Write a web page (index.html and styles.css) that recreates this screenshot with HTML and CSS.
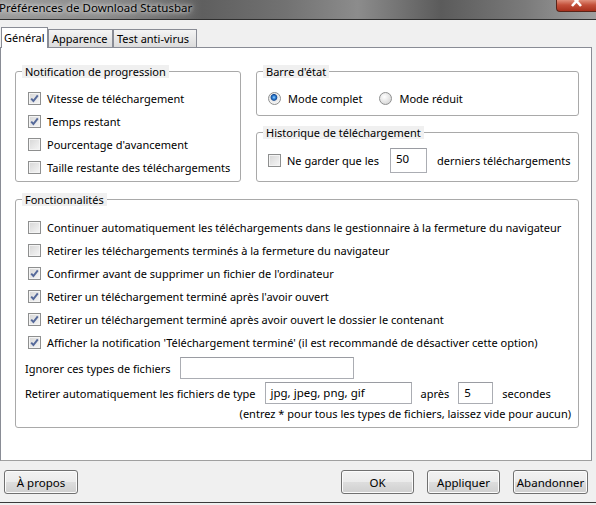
FILE: index.html
```html
<!DOCTYPE html>
<html lang="fr">
<head>
<meta charset="UTF-8">
<title>Préférences de Download Statusbar</title>
<link rel="stylesheet" href="styles.css">
</head>
<body>
<div class="window">
    <div class="titlebar">
        <span class="title">Préférences de Download Statusbar</span>
        <span class="close"><svg width="12" height="7" viewBox="0 0 12 7"><path d="M1 -4 L10 6 M10 -4 L1 6" stroke="#fff" stroke-width="2.6"/></svg></span>
    </div>
    <div class="tabs">
        <span class="tab selected tab-general">Général</span>
        <span class="tab tab-look">Apparence</span>
        <span class="tab tab-av">Test anti-virus</span>
    </div>
    <div class="panel">
        <div class="top-row">
            <fieldset class="group">
                <legend>Notification de progression</legend>
                <div class="group-body notif">
                    <label class="check"><span class="cb on"><svg viewBox="0 0 11 11"><path d="M2.2 5.6 L4.4 8 L8.8 2.4" /></svg></span>Vitesse de téléchargement</label>
                    <label class="check"><span class="cb on"><svg viewBox="0 0 11 11"><path d="M2.2 5.6 L4.4 8 L8.8 2.4" /></svg></span>Temps restant</label>
                    <label class="check"><span class="cb"></span>Pourcentage d'avancement</label>
                    <label class="check"><span class="cb"></span>Taille restante des téléchargements</label>
                </div>
            </fieldset>
            <div class="right-col">
                <fieldset class="group">
                    <legend>Barre d'état</legend>
                    <div class="group-body radios">
                        <label class="radio"><span class="rb on"></span>Mode complet</label>
                        <label class="radio"><span class="rb"></span>Mode réduit</label>
                    </div>
                </fieldset>
                <fieldset class="group">
                    <legend>Historique de téléchargement</legend>
                    <div class="group-body history">
                        <label class="check"><span class="cb"></span>Ne garder que les</label>
                        <span class="field num">50</span>
                        <span class="text">derniers téléchargements</span>
                    </div>
                </fieldset>
            </div>
        </div>

        <fieldset class="group features">
            <legend>Fonctionnalités</legend>
            <div class="group-body">
                <div class="check-list">
                    <label class="check"><span class="cb"></span>Continuer automatiquement les téléchargements dans le gestionnaire à la fermeture du navigateur</label>
                    <label class="check"><span class="cb"></span>Retirer les téléchargements terminés à la fermeture du navigateur</label>
                    <label class="check"><span class="cb on"><svg viewBox="0 0 11 11"><path d="M2.2 5.6 L4.4 8 L8.8 2.4" /></svg></span>Confirmer avant de supprimer un fichier de l'ordinateur</label>
                    <label class="check"><span class="cb on"><svg viewBox="0 0 11 11"><path d="M2.2 5.6 L4.4 8 L8.8 2.4" /></svg></span>Retirer un téléchargement terminé après l'avoir ouvert</label>
                    <label class="check"><span class="cb on"><svg viewBox="0 0 11 11"><path d="M2.2 5.6 L4.4 8 L8.8 2.4" /></svg></span>Retirer un téléchargement terminé après avoir ouvert le dossier le contenant</label>
                    <label class="check"><span class="cb on"><svg viewBox="0 0 11 11"><path d="M2.2 5.6 L4.4 8 L8.8 2.4" /></svg></span>Afficher la notification 'Téléchargement terminé' (il est recommandé de désactiver cette option)</label>
                </div>
                <div class="field-row">
                    <span class="text">Ignorer ces types de fichiers</span>
                    <span class="field ignore"></span>
                </div>
                <div class="field-row">
                    <span class="text">Retirer automatiquement les fichiers de type</span>
                    <span class="field types">jpg, jpeg, png, gif</span>
                    <span class="text">après</span>
                    <span class="field secs">5</span>
                    <span class="text">secondes</span>
                </div>
                <div class="note">(entrez * pour tous les types de fichiers, laissez vide pour aucun)</div>
            </div>
        </fieldset>
    </div>
    <div class="footer">
        <button class="btn about">À propos</button>
        <button class="btn ok">OK</button>
        <button class="btn apply">Appliquer</button>
        <button class="btn cancel">Abandonner</button>
    </div>
</div>
</body>
</html>
```

FILE: styles.css
```css
* {
    box-sizing: border-box;
}

body {
    margin: 0;
    font-family: 'Noto Sans', 'Open Sans', sans-serif;
    font-size: 11px;
    color: #000;
    background: #f0f0f0;
}

.window {
    width: 596px;
    height: 505px;
    display: flex;
    flex-direction: column;
    background: #f0f0f0;
}

/* title bar (aero glass) */
.titlebar {
    height: 20px;
    flex: none;
    display: flex;
    align-items: flex-start;
    border-bottom: 1px solid #2e2e2e;
    background: linear-gradient(90deg, #9a9a9a 0%, #8a8a8a 18%, #5f5f5f 34%, #727272 48%, #8c8c8c 60%, #5b5b5b 74%, #7a7a7a 88%, #a0a0a0 100%);
}

.title {
    font-size: 11.5px;
    line-height: 15px;
    margin-left: -1px;
    text-shadow: 0 0 4px #fff, 0 0 8px #ddd;
}

.close {
    margin-left: auto;
    width: 40px;
    height: 12px;
    display: flex;
    justify-content: center;
    border: 1px solid #5a2418;
    border-top: 0;
    border-right: 0;
    border-radius: 0 0 0 4px;
    background: linear-gradient(#e0907c, #c4503a 45%, #a8301c);
}

/* tabs */
.tabs {
    height: 27px;
    flex: none;
    display: flex;
    align-items: flex-end;
    padding-left: 1px;
}

.tab {
    height: 18px;
    padding: 0 0 0 3px;
    line-height: 18px;
    white-space: nowrap;
    overflow: hidden;
    border: 1px solid #898c95;
    border-bottom: 0;
    background: linear-gradient(#f4f4f4, #e8e8e8 50%, #dcdcdc);
}

.tab.selected {
    position: relative;
    z-index: 1;
    height: 21px;
    margin-bottom: -1px;
    padding-left: 2px;
    line-height: 19px;
    background: #fff;
}

.tab-general {
    width: 47px;
}

.tab-look {
    width: 65px;
}

.tab-av {
    width: 84px;
}

/* panel */
.panel {
    width: 592px;
    height: 414px;
    flex: none;
    padding: 17px 12px 0 14px;
    background: #fff;
    border: 1px solid #898c95;
    border-bottom-color: #a0a0a0;
}

.top-row {
    display: grid;
    grid-template-columns: 226px 1fr;
    column-gap: 15px;
}

.right-col {
    display: flex;
    flex-direction: column;
    justify-content: space-between;
}

.group {
    margin: 0;
    padding: 0;
    min-width: 0;
    border: 1px solid #a9a9a9;
    border-radius: 3px;
}

.group legend {
    margin-left: 6px;
    padding: 0 3px;
    line-height: 13px;
    background: #f0f0f0;
}

.group-body {
    display: flex;
    flex-direction: column;
    gap: 6px;
}

.notif {
    padding: 12px 8px 5px 12px;
}

.radios {
    flex-direction: row;
    gap: 17px;
    padding: 12px 8px 8px 11px;
}

.history {
    flex-direction: row;
    align-items: center;
    gap: 10px;
    padding: 9px 8px 8px 11px;
}

.history .check {
    margin-right: 1px;
}

.text {
    white-space: nowrap;
}

.features {
    margin-top: 11px;
}

.features .group-body {
    gap: 3px;
    padding: 13px 7px 6px 9px;
}

.check-list {
    display: flex;
    flex-direction: column;
    gap: 6px;
    padding-left: 3px;
    margin-bottom: 3px;
}

/* checkbox + radio */
.check, .radio {
    display: flex;
    align-items: center;
    gap: 6px;
    height: 17px;
    white-space: nowrap;
}

.radio {
    gap: 7px;
}

.cb {
    width: 13px;
    height: 13px;
    flex: none;
    border: 1px solid #8e8f8f;
    background: linear-gradient(135deg, #d6d6d6, #f6f6f6);
    box-shadow: inset 0 0 0 1px #f4f4f4;
}

.cb svg {
    display: block;
    width: 11px;
    height: 11px;
}

.cb svg path {
    fill: none;
    stroke: #55699a;
    stroke-width: 2;
}

.rb {
    width: 13px;
    height: 13px;
    flex: none;
    border-radius: 50%;
    border: 1px solid #8e8f8f;
    background: radial-gradient(circle at 40% 35%, #ffffff, #dcdcdc 70%, #c8c8c8);
}

.rb.on {
    background: radial-gradient(circle at 45% 40%, #9ad6ff 0, #2f80d6 18%, #174c94 33%, #e8e8e8 42%, #f4f4f4 70%, #cfcfcf);
}

/* fields */
.field-row {
    display: flex;
    align-items: center;
    gap: 9px;
    height: 22px;
}

.field {
    height: 22px;
    padding: 1px 5px 0;
    line-height: 17px;
    font-size: 11.5px;
    white-space: nowrap;
    border: 1px solid #abadb3;
    border-top-color: #9a9ca2;
    background: #fff;
}

.field.num {
    width: 37px;
    height: 25px;
}

.field.ignore {
    width: 174px;
}

.field.types {
    width: 147px;
}

.field.secs {
    width: 35px;
}

.note {
    height: 14px;
    line-height: 14px;
    text-align: right;
    white-space: nowrap;
}

/* footer */
.footer {
    height: 42px;
    flex: none;
    display: flex;
    align-items: flex-start;
    gap: 13px;
    padding: 9px 8px 0 4px;
    border-bottom: 1px solid #3a3a3a;
}

.btn {
    height: 24px;
    width: 73px;
    padding: 0;
    font: inherit;
    font-size: 11.5px;
    color: #000;
    border: 1px solid #707070;
    border-radius: 3px;
    background: linear-gradient(#f2f2f2 0%, #ebebeb 48%, #dddddd 52%, #cfcfcf 100%);
    box-shadow: inset 0 0 0 1px #fbfbfb;
}

.about {
    width: 74px;
    margin-right: auto;
}

.cancel {
    width: 75px;
}
```
